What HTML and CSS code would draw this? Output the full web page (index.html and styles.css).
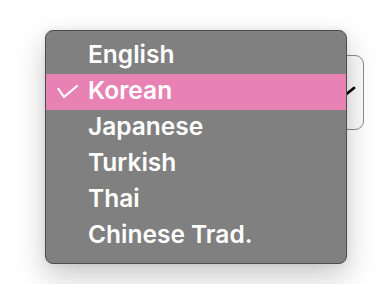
FILE: index.html
```html
<!DOCTYPE html>
<html lang="en">
<head>
<meta charset="utf-8">
<link rel="stylesheet" href="styles.css">
<title>Language menu</title>
</head>
<body>
<div class="stage">
  <div class="picker">
    <svg class="chev" width="14" height="14" viewBox="0 0 14 14"><polyline points="1,12 11,4" fill="none" stroke="#000" stroke-width="2.8" stroke-linecap="round"/></svg>
  </div>
  <ul class="menu">
    <li class="item"><span class="check"></span><span class="label">English</span></li>
    <li class="item selected"><span class="check"><svg width="22" height="14" viewBox="0 0 22 14"><polyline points="1.5,4 7,12 20,1" fill="none" stroke="#fff" stroke-width="2.2" stroke-linecap="round" stroke-linejoin="round"/></svg></span><span class="label">Korean</span></li>
    <li class="item"><span class="check"></span><span class="label">Japanese</span></li>
    <li class="item"><span class="check"></span><span class="label">Turkish</span></li>
    <li class="item"><span class="check"></span><span class="label">Thai</span></li>
    <li class="item"><span class="check"></span><span class="label">Chinese Trad.</span></li>
  </ul>
</div>
</body>
</html>
```
FILE: styles.css
```css
html, body {
  margin: 0;
  padding: 0;
  background: #ffffff;
}
body {
  width: 388px;
  height: 284px;
  overflow: hidden;
  font-family: "Inter", "Noto Sans", sans-serif;
}
.stage {
  position: relative;
  width: 388px;
  height: 284px;
  padding: 55px 0 0 150px;
  box-sizing: border-box;
}
.picker {
  width: 214px;
  height: 75px;
  box-sizing: border-box;
  border: 1.5px solid #8c8c8c;
  border-radius: 9px;
  background: #fbfbfb;
  display: flex;
  align-items: center;
  justify-content: flex-end;
  padding-right: 6px;
}
.chev {
  display: block;
  margin-top: -3px;
}
.menu {
  position: absolute;
  left: 45px;
  top: 30px;
  width: 302px;
  height: 234px;
  box-sizing: border-box;
  margin: 0;
  padding: 7px 0 8px;
  list-style: none;
  background: #808080;
  border: 1px solid #4e4e4e;
  border-radius: 8px;
  box-shadow: 0 12px 30px rgba(0, 0, 0, 0.22), 0 0 6px rgba(0, 0, 0, 0.08);
}
.item {
  height: 36px;
  display: flex;
  align-items: center;
  color: #ffffff;
  font-size: 24.5px;
  font-weight: 600;
  letter-spacing: 0;
}
.item.selected {
  background: #e882b4;
}
.check {
  width: 42px;
  flex: none;
  display: flex;
  justify-content: flex-start;
  padding-left: 11px;
  box-sizing: border-box;
}
.check svg {
  display: block;
  margin-top: 0;
}
.label {
  line-height: 36px;
  margin-top: -5px;
}
```
